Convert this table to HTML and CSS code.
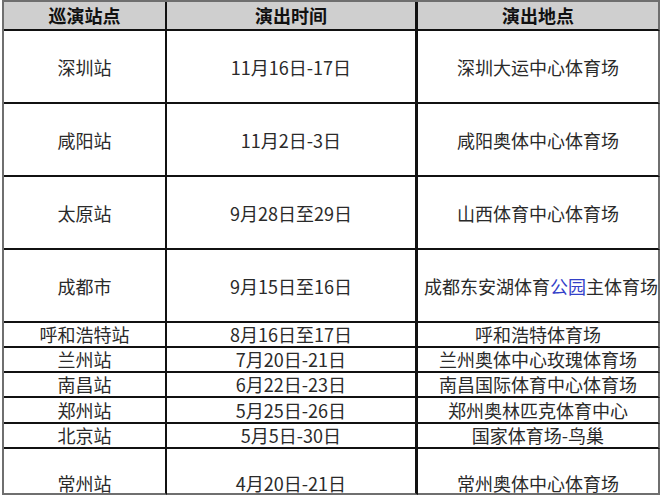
FILE: index.html
```html
<!DOCTYPE html>
<html lang="zh">
<head>
<meta charset="utf-8">
<link rel="stylesheet" href="styles.css">
</head>
<body>
<table class="tour">
  <tr class="head">
    <td class="c1">巡演站点</td><td class="c2">演出时间</td><td class="c3">演出地点</td>
  </tr>
  <tr class="tall">
    <td class="c1">深圳站</td><td class="c2">11月16日-17日</td><td class="c3">深圳大运中心体育场</td>
  </tr>
  <tr class="tall">
    <td class="c1">咸阳站</td><td class="c2">11月2日-3日</td><td class="c3">咸阳奥体中心体育场</td>
  </tr>
  <tr class="tall">
    <td class="c1">太原站</td><td class="c2">9月28日至29日</td><td class="c3">山西体育中心体育场</td>
  </tr>
  <tr class="tall">
    <td class="c1">成都市</td><td class="c2">9月15日至16日</td><td class="c3 wide">成都东安湖体育<span class="link">公园</span>主体育场</td>
  </tr>
  <tr class="short">
    <td class="c1">呼和浩特站</td><td class="c2">8月16日至17日</td><td class="c3">呼和浩特体育场</td>
  </tr>
  <tr class="short">
    <td class="c1">兰州站</td><td class="c2">7月20日-21日</td><td class="c3">兰州奥体中心玫瑰体育场</td>
  </tr>
  <tr class="short">
    <td class="c1">南昌站</td><td class="c2">6月22日-23日</td><td class="c3">南昌国际体育中心体育场</td>
  </tr>
  <tr class="short2">
    <td class="c1">郑州站</td><td class="c2">5月25日-26日</td><td class="c3">郑州奥林匹克体育中心</td>
  </tr>
  <tr class="short">
    <td class="c1">北京站</td><td class="c2">5月5日-30日</td><td class="c3">国家体育场-鸟巢</td>
  </tr>
  <tr class="last">
    <td class="c1">常州站</td><td class="c2">4月20日-21日</td><td class="c3">常州奥体中心体育场</td>
  </tr>
</table>
</body>
</html>
```

FILE: styles.css
```css
html, body {
  margin: 0;
  padding: 0;
  background: #ffffff;
}

.tour {
  margin-left: 2px;
  border-spacing: 0;
  border-collapse: separate;
  border-left: 2px solid #6f6f6f;
  border-top: 2px solid #6f6f6f;
  table-layout: fixed;
  font-family: "Noto Sans CJK SC", "Microsoft YaHei", sans-serif;
  font-size: 18px;
  color: #2a2a2a;
}

.tour td {
  padding: 0;
  text-align: center;
  vertical-align: middle;
  white-space: nowrap;
  border-right: 2px solid #111111;
  border-bottom: 2px solid #111111;
}

.tour .c1 { width: 162px; }
.tour .c2 { width: 250px; border-right-width: 3px; }
.tour .c3 { width: 234px; border-right-color: #6f6f6f; }

.tour .wide {
  text-align: left;
  padding-left: 6px;
  width: 228px;
  overflow: hidden;
}

.head td {
  height: 27px;
  line-height: 27px;
  background: #cfcfcf;
  font-weight: bold;
  color: #111111;
}

.tall td { height: 71px; line-height: 24px; }
.short td { height: 23px; line-height: 23px; }
.short2 td { height: 24px; line-height: 24px; }

.last td {
  height: 44px;
  line-height: 20px;
  vertical-align: bottom;
  border-bottom-color: #6f6f6f;
}

.link { color: #3340c8; }
```
